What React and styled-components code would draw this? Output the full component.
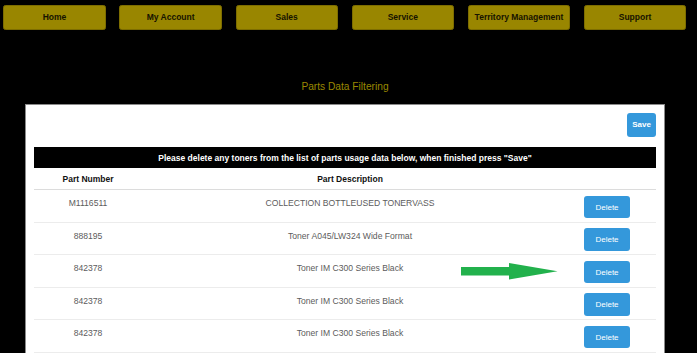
import React from 'react';
import styled, { createGlobalStyle } from 'styled-components';

const GlobalStyle = createGlobalStyle`
  html, body {
    margin: 0;
    padding: 0;
    background: #000;
    overflow: hidden;
    font-family: "Liberation Sans", Arial, sans-serif;
  }
`;

const Page = styled.div`
  width: 697px;
  height: 353px;
  background: #000;
`;

const NavBar = styled.nav`
  display: flex;
  gap: 13.8px;
  padding: 5px 0 0 3.4px;
`;

const NavButton = styled.button`
  width: 102.3px;
  height: 24.7px;
  background: #998600;
  border: 1px solid #7d6d00;
  border-radius: 2.5px;
  color: #161300;
  font-family: inherit;
  font-size: 8.5px;
  font-weight: bold;
  padding: 0;
`;

const Title = styled.h1`
  margin: 51px 7px 11px 0;
  text-align: center;
  color: #9a8800;
  font-size: 10.2px;
  line-height: 12px;
  font-weight: normal;
`;

const Panel = styled.div`
  margin-left: 25px;
  width: 640px;
  box-sizing: border-box;
  background: #fff;
  border: 1px solid #8a8a8a;
  padding: 8px 8px 30px;
`;

const SaveRow = styled.div`
  display: flex;
  justify-content: flex-end;
`;

const BlueButton = styled.button`
  width: ${p => p.$w}px;
  height: ${p => p.$h}px;
  background: #3498db;
  border: none;
  border-radius: 3px;
  color: #fff;
  font-family: inherit;
  font-size: 8px;
  font-weight: ${p => (p.$bold ? 'bold' : 'normal')};
  padding: 0;
`;

const Banner = styled.div`
  margin-top: 10px;
  height: 21.7px;
  background: #000;
  color: #fff;
  font-size: 8.5px;
  font-weight: bold;
  display: flex;
  align-items: center;
  justify-content: center;
`;

const Row = styled.div`
  position: relative;
  display: grid;
  grid-template-columns: 108px 1fr 98px;
  box-sizing: border-box;
  height: ${p => (p.$head ? '22px' : '32.5px')};
  border-bottom: 1px solid ${p => (p.$head ? '#dcdcdc' : '#ececec')};
`;

const HeadCell = styled.div`
  display: flex;
  align-items: center;
  justify-content: center;
  padding-top: 1px;
  font-size: 8.5px;
  font-weight: bold;
  color: #111;
`;

const Cell = styled.div`
  text-align: center;
  padding-top: 7px;
  font-size: 8.6px;
  line-height: 12px;
  color: #5c5c5c;
`;

const ActionCell = styled.div`
  display: flex;
  align-items: center;
  justify-content: center;
  padding-top: 2px;
`;

const Arrow = styled.svg`
  position: absolute;
  left: 427px;
  top: 8px;
`;

const navItems = ['Home', 'My Account', 'Sales', 'Service', 'Territory Management', 'Support'];

const parts = [
  { num: 'M1116511', desc: 'COLLECTION BOTTLEUSED TONERVASS' },
  { num: '888195', desc: 'Toner A045/LW324 Wide Format' },
  { num: '842378', desc: 'Toner IM C300 Series Black', flagged: true },
  { num: '842378', desc: 'Toner IM C300 Series Black' },
  { num: '842378', desc: 'Toner IM C300 Series Black' },
];

export default function App() {
  return (
    <Page>
      <GlobalStyle />
      <NavBar>
        {navItems.map(item => (
          <NavButton key={item}>{item}</NavButton>
        ))}
      </NavBar>
      <Title>Parts Data Filtering</Title>
      <Panel>
        <SaveRow>
          <BlueButton $w={29} $h={24} $bold>Save</BlueButton>
        </SaveRow>
        <Banner>Please delete any toners from the list of parts usage data below, when finished press "Save"</Banner>
        <Row $head>
          <HeadCell>Part Number</HeadCell>
          <HeadCell>Part Description</HeadCell>
          <HeadCell />
        </Row>
        {parts.map((part, i) => (
          <Row key={i}>
            <Cell>{part.num}</Cell>
            <Cell>{part.desc}</Cell>
            <ActionCell>
              <BlueButton $w={46} $h={22.5}>Delete</BlueButton>
            </ActionCell>
            {part.flagged && (
              <Arrow width="97" height="17" viewBox="0 0 97 17">
                <path d="M0 4 H48 V0 L96.5 8.3 L48 16.5 V12.4 H0 Z" fill="#22b14c" />
              </Arrow>
            )}
          </Row>
        ))}
      </Panel>
    </Page>
  );
}
